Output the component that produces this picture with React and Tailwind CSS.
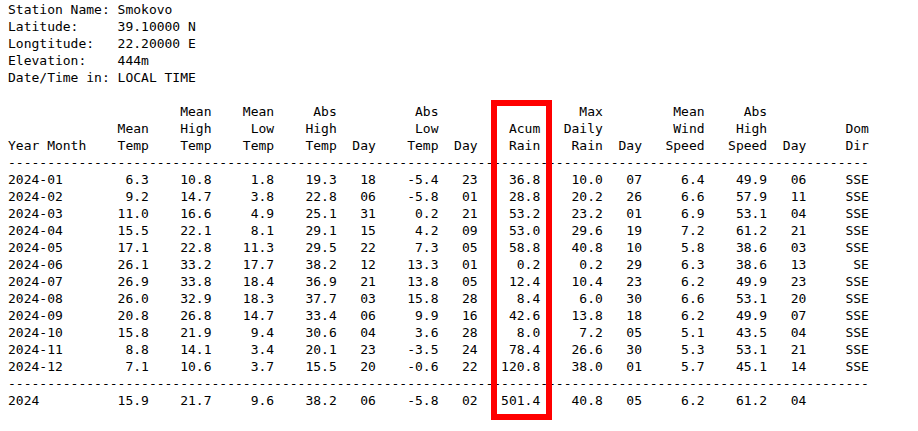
import React from 'react';

const station = [
  'Station Name: Smokovo',
  'Latitude:     39.10000 N',
  'Longtitude:   22.20000 E',
  'Elevation:    444m',
  'Date/Time in: LOCAL TIME',
];

// column widths in characters, first one left-aligned
const widths = [10, 8, 8, 8, 8, 5, 8, 5, 8, 8, 5, 8, 8, 5, 8];

const header = [
  ['', '', 'Mean', 'Mean', 'Abs', '', 'Abs', '', '', 'Max', '', 'Mean', 'Abs', '', ''],
  ['', 'Mean', 'High', 'Low', 'High', '', 'Low', '', 'Acum', 'Daily', '', 'Wind', 'High', '', 'Dom'],
  ['Year Month', 'Temp', 'Temp', 'Temp', 'Temp', 'Day', 'Temp', 'Day', 'Rain', 'Rain', 'Day', 'Speed', 'Speed', 'Day', 'Dir'],
];

const rows = [
  ['2024-01', '6.3', '10.8', '1.8', '19.3', '18', '-5.4', '23', '36.8', '10.0', '07', '6.4', '49.9', '06', 'SSE'],
  ['2024-02', '9.2', '14.7', '3.8', '22.8', '06', '-5.8', '01', '28.8', '20.2', '26', '6.6', '57.9', '11', 'SSE'],
  ['2024-03', '11.0', '16.6', '4.9', '25.1', '31', '0.2', '21', '53.2', '23.2', '01', '6.9', '53.1', '04', 'SSE'],
  ['2024-04', '15.5', '22.1', '8.1', '29.1', '15', '4.2', '09', '53.0', '29.6', '19', '7.2', '61.2', '21', 'SSE'],
  ['2024-05', '17.1', '22.8', '11.3', '29.5', '22', '7.3', '05', '58.8', '40.8', '10', '5.8', '38.6', '03', 'SSE'],
  ['2024-06', '26.1', '33.2', '17.7', '38.2', '12', '13.3', '01', '0.2', '0.2', '29', '6.3', '38.6', '13', 'SE'],
  ['2024-07', '26.9', '33.8', '18.4', '36.9', '21', '13.8', '05', '12.4', '10.4', '23', '6.2', '49.9', '23', 'SSE'],
  ['2024-08', '26.0', '32.9', '18.3', '37.7', '03', '15.8', '28', '8.4', '6.0', '30', '6.6', '53.1', '20', 'SSE'],
  ['2024-09', '20.8', '26.8', '14.7', '33.4', '06', '9.9', '16', '42.6', '13.8', '18', '6.2', '49.9', '07', 'SSE'],
  ['2024-10', '15.8', '21.9', '9.4', '30.6', '04', '3.6', '28', '8.0', '7.2', '05', '5.1', '43.5', '04', 'SSE'],
  ['2024-11', '8.8', '14.1', '3.4', '20.1', '23', '-3.5', '24', '78.4', '26.6', '30', '5.3', '53.1', '21', 'SSE'],
  ['2024-12', '7.1', '10.6', '3.7', '15.5', '20', '-0.6', '22', '120.8', '38.0', '01', '5.7', '45.1', '14', 'SSE'],
];

const total = ['2024', '15.9', '21.7', '9.6', '38.2', '06', '-5.8', '02', '501.4', '40.8', '05', '6.2', '61.2', '04', ''];

const fmt = (cells) =>
  cells.map((c, i) => (i === 0 ? c.padEnd(widths[i]) : c.padStart(widths[i]))).join('').replace(/\s+$/, '');

const dashes = '-'.repeat(110);

export default function App() {
  const lines = [
    ...station,
    '',
    ...header.map(fmt),
    dashes,
    ...rows.map(fmt),
    dashes,
    fmt(total),
  ];

  return (
    <div className="relative w-[918px] h-[431px] bg-white overflow-hidden">
      <pre className="pl-2 pt-px m-0 text-[13px] leading-[17px] text-black font-['DejaVu_Sans_Mono',monospace]">
        {lines.join('\n')}
      </pre>
      <div className="absolute left-[491px] top-[100px] w-[61px] h-[320px] border-[6px] border-[#ff0000]"></div>
    </div>
  );
}
